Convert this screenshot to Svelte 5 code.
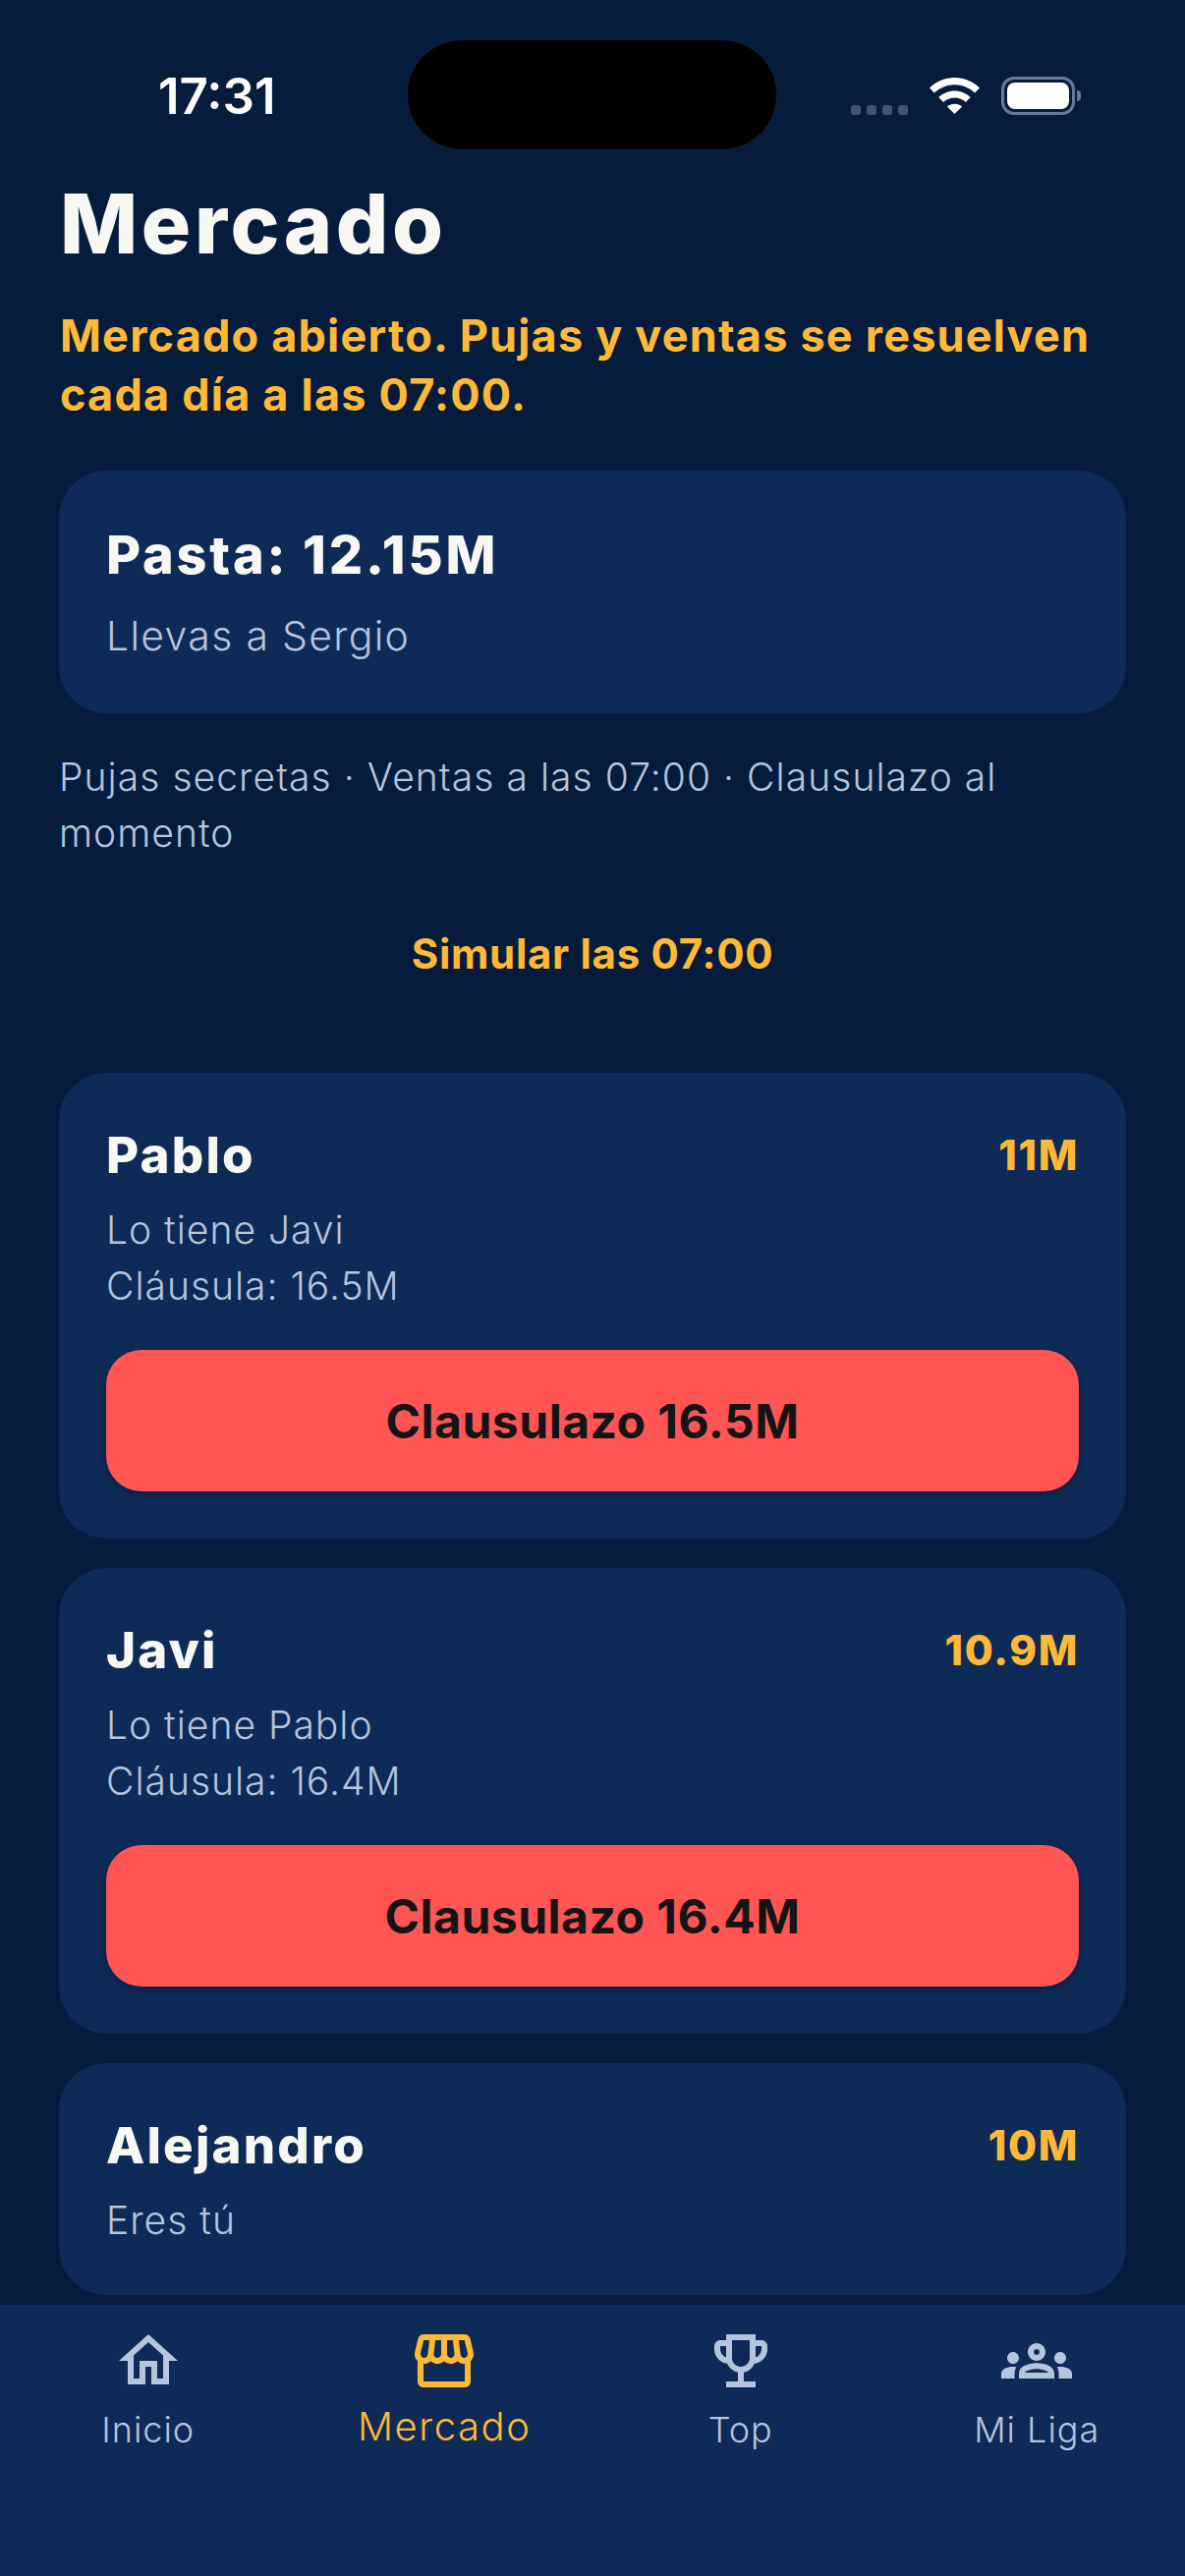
<script>
  const players = [
    { name: 'Pablo', price: '11M', owner: 'Lo tiene Javi', clause: 'Cláusula: 16.5M', action: 'Clausulazo 16.5M' },
    { name: 'Javi', price: '10.9M', owner: 'Lo tiene Pablo', clause: 'Cláusula: 16.4M', action: 'Clausulazo 16.4M' },
    { name: 'Alejandro', price: '10M', owner: 'Eres tú' }
  ]

  const tabs = [
    {
      label: 'Inicio',
      d: 'M12 5.69l5 4.5V18h-2v-6H9v6H7v-7.81l5-4.5M12 3L2 12h3v8h6v-6h2v6h6v-8h3L12 3z'
    },
    {
      label: 'Mercado',
      active: true,
      d: 'M21.9 8.89l-1.05-4.37c-.22-.9-1-1.52-1.91-1.52H5.05c-.9 0-1.69.63-1.9 1.52L2.1 8.89c-.24 1.02-.02 2.06.62 2.88.08.11.19.19.28.29V19c0 1.1.9 2 2 2h14c1.1 0 2-.9 2-2v-6.94c.09-.09.2-.18.28-.28.64-.82.87-1.87.62-2.89zm-2.99-3.9l1.05 4.37c.1.42.01.84-.25 1.17-.14.18-.44.47-.94.47-.61 0-1.14-.49-1.21-1.14L16.98 5l1.93-.01zM13 5h1.96l.54 4.52c.05.39-.07.78-.33 1.07-.22.26-.54.41-.95.41-.67 0-1.22-.59-1.22-1.31V5zM8.49 9.52L9.04 5H11v4.69c0 .72-.55 1.31-1.29 1.31-.34 0-.65-.15-.89-.41-.25-.29-.37-.68-.33-1.07zm-4.45-.16L5.05 5h1.97l-.58 4.86c-.08.65-.6 1.14-1.21 1.14-.49 0-.8-.29-.93-.47-.27-.32-.36-.75-.26-1.17zM5 19v-6.03c.08.01.15.03.23.03.87 0 1.66-.36 2.24-.95.6.6 1.4.95 2.31.95.87 0 1.65-.36 2.23-.93.59.57 1.39.93 2.29.93.84 0 1.64-.35 2.24-.95.58.59 1.37.95 2.24.95.08 0 .15-.02.23-.03V19H5z'
    },
    {
      label: 'Top',
      d: 'M19 5h-2V3H7v2H5c-1.1 0-2 .9-2 2v1c0 2.55 1.92 4.63 4.39 4.94.63 1.5 1.98 2.63 3.61 2.96V19H7v2h10v-2h-4v-3.1c1.63-.33 2.98-1.46 3.61-2.96C19.08 12.63 21 10.55 21 8V7c0-1.1-.9-2-2-2zM5 8V7h2v3.82C5.84 10.4 5 9.3 5 8zm7 6c-1.65 0-3-1.35-3-3V5h6v6c0 1.65-1.35 3-3 3zm7-6c0 1.3-.84 2.4-2 2.82V7h2v1z'
    },
    {
      label: 'Mi Liga',
      d: 'M4 13c1.1 0 2-.9 2-2s-.9-2-2-2-2 .9-2 2 .9 2 2 2zm1.13 1.1c-.37-.06-.74-.1-1.13-.1-.99 0-1.93.21-2.78.58C.48 14.9 0 15.62 0 16.43V18h4.5v-1.61c0-.83.23-1.61.63-2.29zM20 13c1.1 0 2-.9 2-2s-.9-2-2-2-2 .9-2 2 .9 2 2 2zm4 3.43c0-.81-.48-1.53-1.22-1.85-.85-.37-1.79-.58-2.78-.58-.39 0-.76.04-1.13.1.4.68.63 1.46.63 2.29V18H24v-1.57zm-7.76-2.78c-1.17-.52-2.61-.9-4.24-.9-1.63 0-3.07.39-4.24.9C6.68 14.13 6 15.21 6 16.39V18h12v-1.61c0-1.18-.68-2.26-1.76-2.74zM8.07 16c.09-.23.13-.39.91-.69.97-.38 1.99-.56 3.02-.56s2.05.18 3.02.56c.77.3.81.46.91.69H8.07zM12 8c.55 0 1 .45 1 1s-.45 1-1 1-1-.45-1-1 .45-1 1-1m0-2c-1.66 0-3 1.34-3 3s1.34 3 3 3 3-1.34 3-3-1.34-3-3-3z'
    }
  ]
</script>

<div class="screen">
  <div class="island"></div>

  <div class="status">
    <span class="time">17:31</span>
    <div class="indicators">
      <div class="signal"><i></i><i></i><i></i><i></i></div>
      <svg class="wifi" viewBox="0 0 51 37" width="51" height="37">
        <path fill="#fff" d="M25.5 0C35 0 44 3.8 51 10.4l-4.8 5.2C40.6 10.3 33.3 7.2 25.5 7.2S10.4 10.3 4.8 15.6L0 10.4C7 3.8 16 0 25.5 0zm0 13.4c6 0 11.8 2.4 16.2 6.5l-4.8 5.2c-3.1-2.9-7.1-4.5-11.4-4.5s-8.3 1.6-11.4 4.5l-4.8-5.2c4.4-4.1 10.2-6.5 16.2-6.5zm0 13.3c2.9 0 5.6 1 7.6 2.8L25.5 37l-7.6-7.5c2-1.8 4.7-2.8 7.6-2.8z" />
      </svg>
      <div class="battery"><div class="charge"></div></div>
      <div class="nub"></div>
    </div>
  </div>

  <main class="content">
    <h1>Mercado</h1>
    <p class="notice">Mercado abierto. Pujas y ventas se resuelven cada día a las 07:00.</p>

    <section class="card wallet">
      <div class="balance">Pasta: 12.15M</div>
      <div class="muted">Llevas a Sergio</div>
    </section>

    <p class="rules">Pujas secretas · Ventas a las 07:00 · Clausulazo al momento</p>

    <div class="simulate">Simular las 07:00</div>

    <div class="list">
      {#each players as p (p.name)}
        <section class="card player">
          <div class="row">
            <span class="name">{p.name}</span>
            <span class="price">{p.price}</span>
          </div>
          <div class="muted detail">{p.owner}</div>
          {#if p.clause}
            <div class="muted">{p.clause}</div>
          {/if}
          {#if p.action}
            <button type="button" class="steal">{p.action}</button>
          {/if}
        </section>
      {/each}
    </div>
  </main>

  <nav class="tabbar">
    {#each tabs as t (t.label)}
      <div class="tab" class:active={t.active}>
        <svg viewBox="0 0 24 24" width="72" height="72"><path fill="currentColor" d={t.d} /></svg>
        <span>{t.label}</span>
      </div>
    {/each}
  </nav>
</div>

<style>
  :global(body) {
    margin: 0;
    background: #061c3d;
  }
  .screen {
    position: relative;
    width: 1206px;
    height: 2622px;
    display: flex;
    flex-direction: column;
    overflow: hidden;
    background: #061c3d;
    font-family: Inter, "Liberation Sans", sans-serif;
    color: #f7f7f3;
  }
  .island {
    position: absolute;
    left: 415px;
    top: 41px;
    width: 375px;
    height: 111px;
    border-radius: 56px;
    background: #000;
  }

  .status {
    display: flex;
    justify-content: space-between;
    align-items: center;
    height: 114px;
    padding: 40px 106px 0 161px;
    flex: none;
  }
  .time {
    font-size: 51px;
    font-weight: 600;
    color: #fff;
  }
  .indicators {
    display: flex;
    align-items: center;
    height: 40px;
  }
  .signal {
    display: flex;
    gap: 6px;
    align-self: flex-end;
    margin-right: 22px;
  }
  .signal i {
    width: 10px;
    height: 10px;
    border-radius: 3px;
    background: #44546f;
  }
  .battery {
    width: 75px;
    height: 39px;
    box-sizing: border-box;
    margin-left: 22px;
    padding: 3px;
    border: 3px solid #6a7a94;
    border-radius: 13px;
  }
  .charge {
    height: 100%;
    border-radius: 8px;
    background: #fff;
  }
  .nub {
    width: 4px;
    height: 11px;
    margin-left: 2px;
    border-radius: 0 4px 4px 0;
    background: #6a7a94;
  }

  .content {
    flex: 1;
    min-height: 0;
    overflow: hidden;
    padding: 0 60px;
  }
  h1 {
    margin: 24px 0 0;
    padding-left: 1px;
    font-size: 84px;
    line-height: 100px;
    font-weight: 800;
    letter-spacing: 3.6px;
  }
  .notice {
    margin: 34px 0 0;
    padding-left: 1px;
    font-size: 45px;
    line-height: 60px;
    font-weight: 700;
    letter-spacing: 1.2px;
    color: #ffb938;
  }

  .card {
    box-sizing: border-box;
    border-radius: 48px;
    background: #0e2a56;
  }
  .wallet {
    height: 247px;
    margin-top: 47px;
    padding: 53px 48px 0;
  }
  .balance {
    font-size: 54px;
    line-height: 66px;
    font-weight: 800;
    letter-spacing: 2.8px;
  }
  .muted {
    font-size: 39px;
    line-height: 57px;
    font-weight: 300;
    letter-spacing: 1px;
    color: #b4c5dd;
  }
  .wallet .muted {
    margin-top: 21px;
    font-size: 41px;
    letter-spacing: 1.3px;
  }
  .rules {
    margin: 36px 0 0;
    font-size: 39px;
    line-height: 57px;
    font-weight: 300;
    letter-spacing: 1.05px;
    color: #b4c5dd;
  }
  .simulate {
    margin-top: 68px;
    text-align: center;
    font-size: 42px;
    line-height: 54px;
    font-weight: 700;
    letter-spacing: 0.7px;
    color: #ffb938;
  }

  .list {
    display: flex;
    flex-direction: column;
    gap: 30px;
    margin-top: 94px;
  }
  .player {
    padding: 48px;
  }
  .row {
    display: flex;
    justify-content: space-between;
    align-items: center;
    height: 66px;
    margin-top: 2px;
  }
  .name {
    font-size: 51px;
    font-weight: 800;
    letter-spacing: 2.2px;
  }
  .price {
    font-size: 42px;
    font-weight: 800;
    letter-spacing: 1.7px;
    color: #ffb938;
  }
  .detail {
    margin-top: 15px;
  }
  .steal {
    display: block;
    width: 100%;
    height: 144px;
    margin-top: 37px;
    padding: 0;
    border: none;
    border-radius: 36px;
    background: #ff5555;
    color: #141414;
    font-family: inherit;
    font-size: 48px;
    font-weight: 700;
    letter-spacing: 0.5px;
    box-shadow: 0 3px 9px rgba(0, 0, 0, 0.25);
  }

  .tabbar {
    flex: none;
    display: grid;
    grid-template-columns: repeat(4, 1fr);
    height: 276px;
    background: #0e2a56;
  }
  .tab {
    display: flex;
    flex-direction: column;
    align-items: center;
    padding-top: 21px;
    color: #b4c5dd;
    font-size: 36px;
    font-weight: 300;
    letter-spacing: 1px;
  }
  .tab span {
    margin-top: 12px;
    line-height: 44px;
  }
  .tab.active {
    color: #ffb938;
    font-size: 40px;
    letter-spacing: 1.6px;
  }
  .tab.active span {
    margin-top: 6px;
    line-height: 50px;
  }
</style>
